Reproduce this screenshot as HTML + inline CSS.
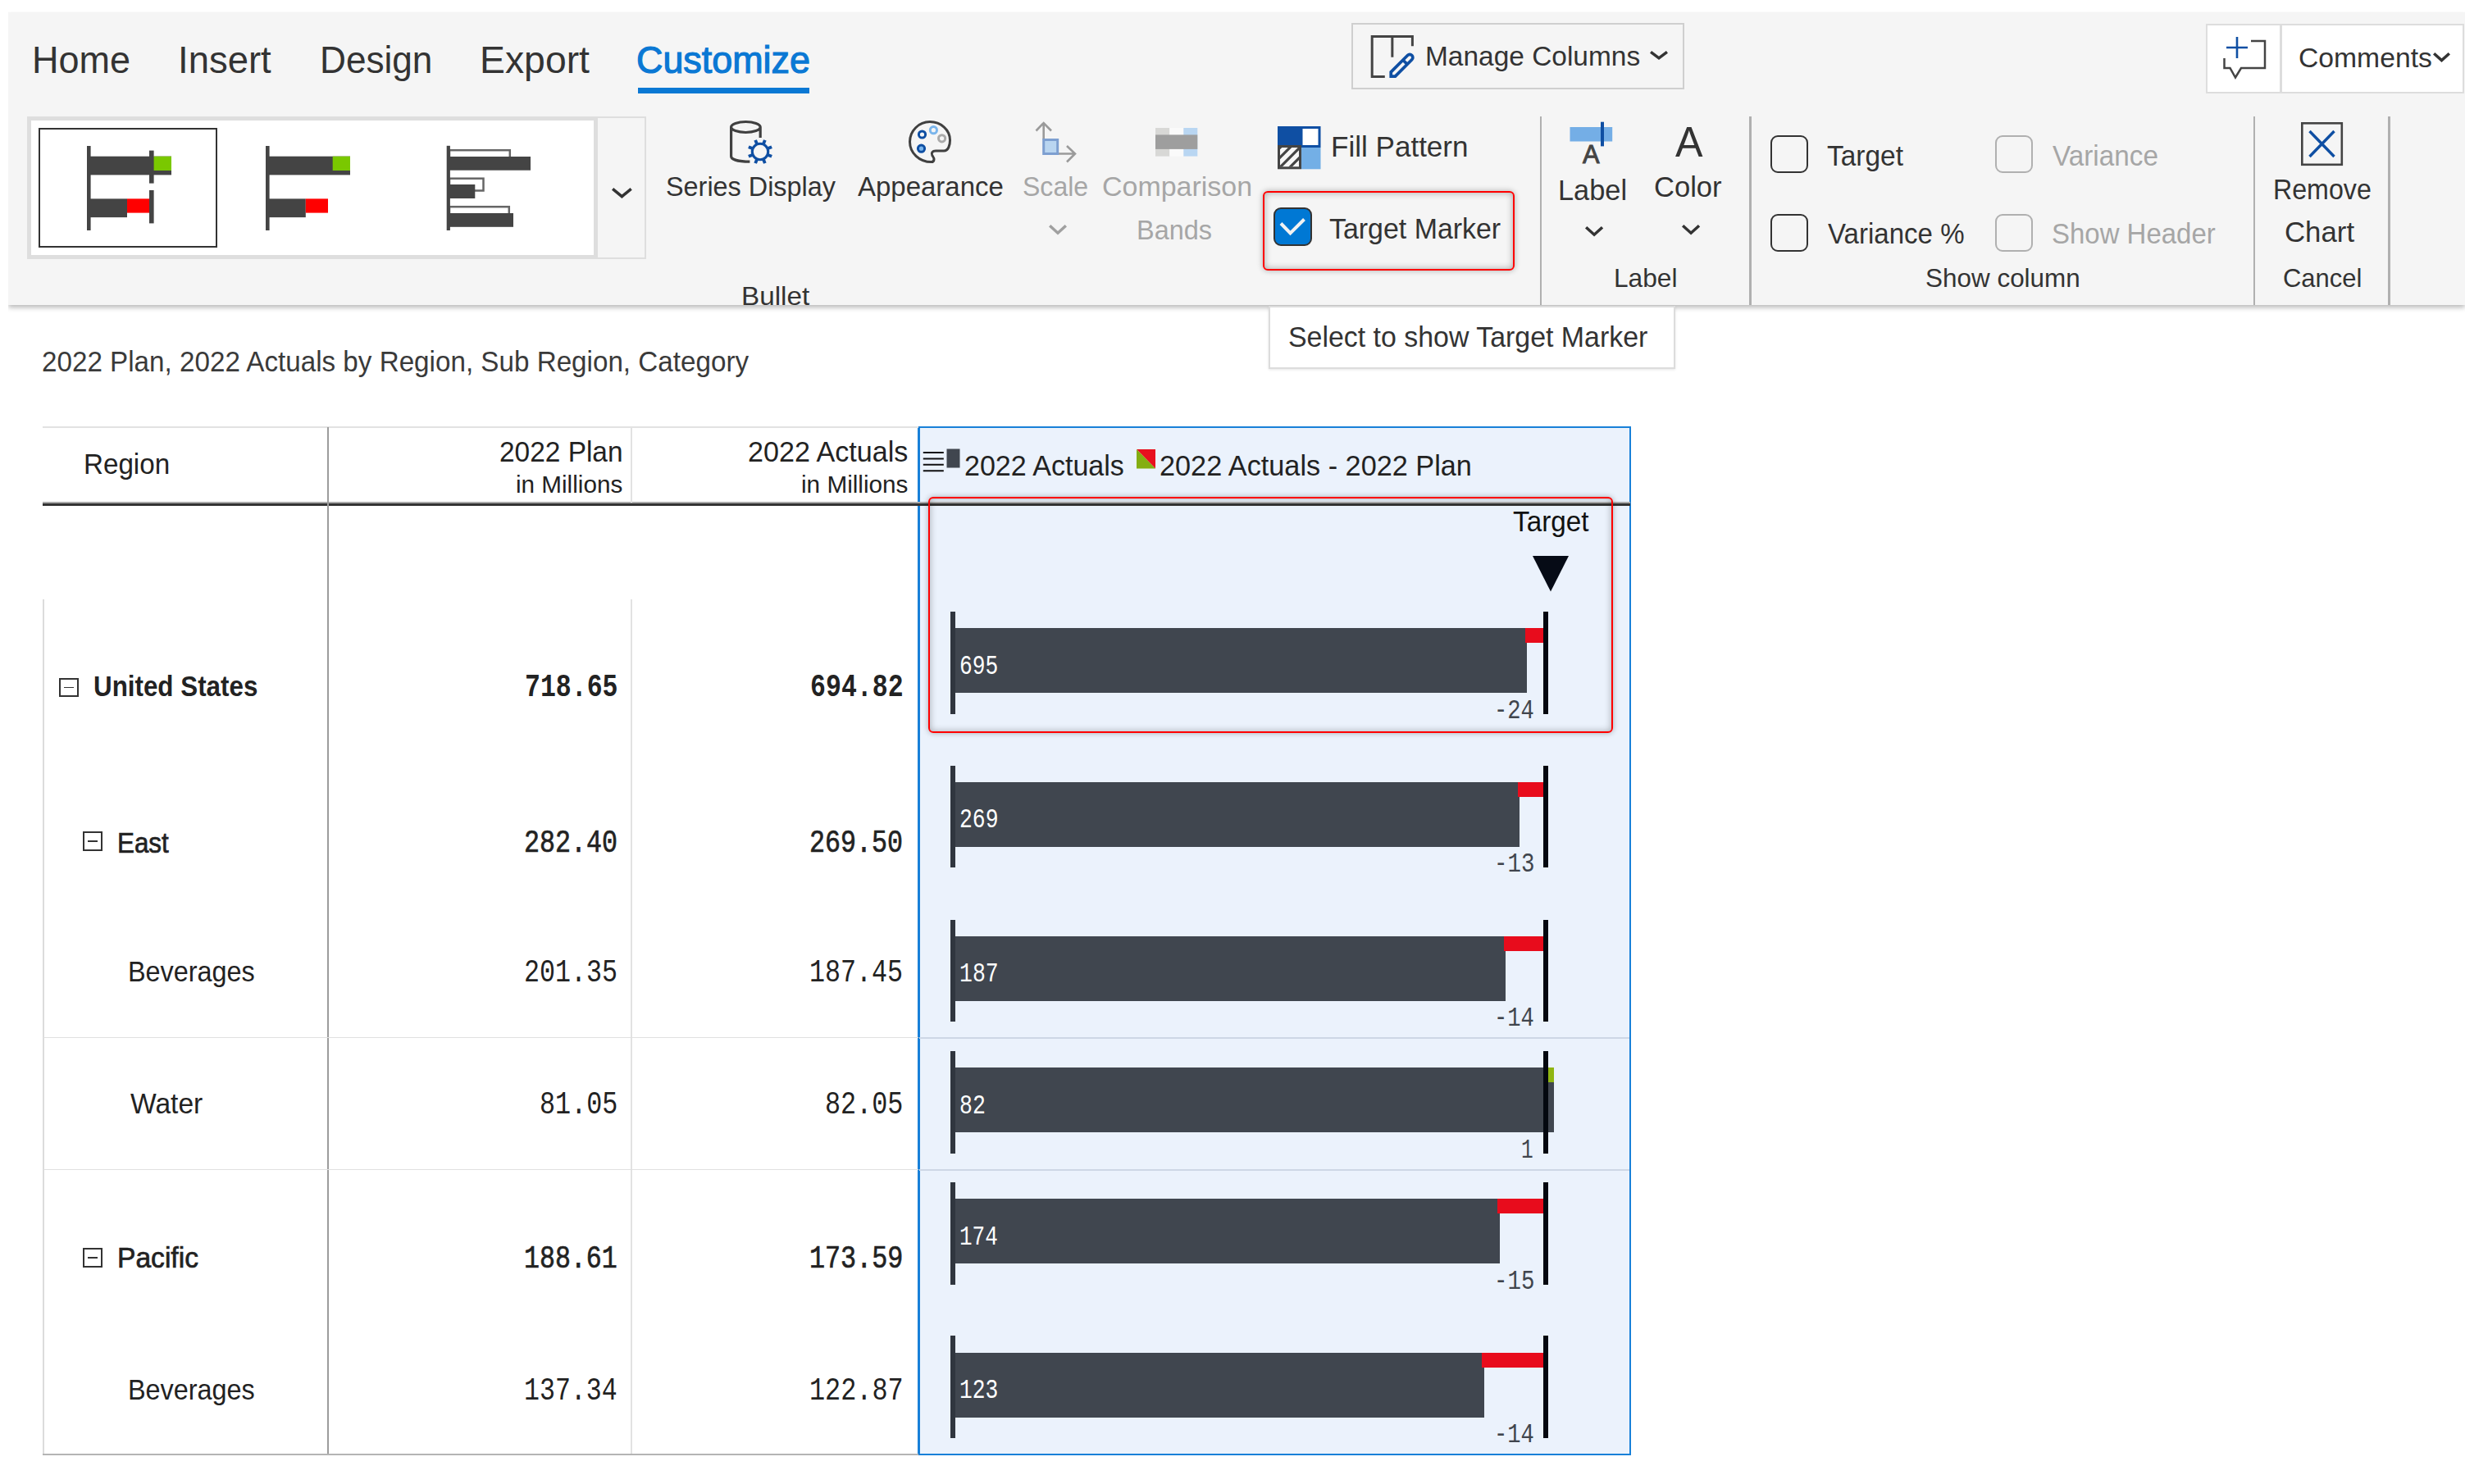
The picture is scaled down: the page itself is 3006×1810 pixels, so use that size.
<!DOCTYPE html>
<html lang="en"><head><meta charset="utf-8"><title>Bullet chart - Target Marker</title>
<style>
html,body{margin:0;padding:0;background:#fff}
body{width:3006px;height:1810px;position:relative;overflow:hidden;font-family:"Liberation Sans","DejaVu Sans",sans-serif;color:#333}
.b{position:absolute;display:block}
.t{position:absolute;white-space:nowrap;line-height:1;transform-origin:0 0;display:block}
.m{font-family:"Liberation Mono","DejaVu Sans Mono",monospace}
nav,section{display:contents}
</style></head><body>
<div id="ribbon" class="b" style="left:10px;top:14.5px;width:2996px;height:357px;background:#f5f5f5;box-shadow:0 2.5px 6px rgba(0,0,0,.28);clip-path:inset(0 0 -14px 0)"></div>
<nav id="tabs">
<span class="t" style="left:38.83px;top:49.56px;font-size:46px;transform:scaleX(0.9786);">Home</span>
<span class="t" style="left:217.05px;top:49.56px;font-size:46px;transform:scaleX(0.9887);">Insert</span>
<span class="t" style="left:390.40px;top:49.56px;font-size:46px;transform:scaleX(0.9597);">Design</span>
<span class="t" style="left:584.72px;top:49.56px;font-size:46px;transform:scaleX(1.0078);">Export</span>
<span class="t" style="left:776.31px;top:49.56px;font-size:46px;transform:scaleX(0.9754);color:#0a78d4;-webkit-text-stroke:1.2px #0a78d4;">Customize</span>
<div class="b" style="left:778px;top:106.9px;width:209px;height:7.3px;background:#0a78d4"></div>
</nav>
<div class="b" style="left:1648px;top:28px;width:406px;height:81px;border:2px solid #cfcfcf;box-sizing:border-box"></div>
<svg class="b" style="left:1668px;top:40px" width="60" height="60" viewBox="0 0 60 60"><path d="M20.8 53.4 H5.2 V4.4 H54.4 V16.3 M29.85 4.4 V29.7" fill="none" stroke="#444" stroke-width="3"/><g transform="translate(26.4,54.9) rotate(45)"><path d="M0 -2.6 L3.7 -6.3 V-35 a3.7 3.7 0 0 0 -7.4 0 V-6.3 Z M-3.7 -27 H3.7" fill="#f5f5f5" stroke="#0f4fa3" stroke-width="3.7" stroke-linejoin="miter"/></g></svg>
<span class="t" style="left:1737.79px;top:50.72px;font-size:34px;transform:scaleX(0.9838);">Manage Columns</span>
<svg class="b" style="left:2008.4px;top:57.8px" width="30" height="19" viewBox="0 0 30 19"><path d="M5.05 5.40 L15.00 12.82 L24.95 5.40" fill="none" stroke="#333" stroke-width="3.5" stroke-linejoin="miter"/></svg>
<div class="b" style="left:2690px;top:28.5px;width:315px;height:85px;background:#fff;border:2px solid #ddd;box-sizing:border-box"></div>
<div class="b" style="left:2780px;top:30px;width:2.5px;height:82px;background:#ddd"></div>
<svg class="b" style="left:2706px;top:40px" width="62" height="60" viewBox="0 0 62 60"><path d="M39 10 H56 V43 H27 L20 54.5 L13.5 43 H6.5 V31" fill="none" stroke="#444" stroke-width="2.5"/><path d="M9 18 H35 M22 5 V31" fill="none" stroke="#0f4fa3" stroke-width="2.6"/></svg>
<span class="t" style="left:2802.51px;top:52.72px;font-size:34px;transform:scaleX(0.9907);">Comments</span>
<svg class="b" style="left:2963.0px;top:60.0px" width="29" height="20" viewBox="0 0 29 20"><path d="M5.17 5.30 L14.50 13.65 L23.83 5.30" fill="none" stroke="#333" stroke-width="3.5" stroke-linejoin="miter"/></svg>
<div class="b" style="left:33px;top:142px;width:696px;height:174px;background:#fff;border:5px solid #dedede;box-sizing:border-box"></div>
<div class="b" style="left:729px;top:142px;width:58.5px;height:174px;border:2px solid #dedede;border-left:none;box-sizing:border-box"></div>
<svg class="b" style="left:742.0px;top:225.0px" width="32.8" height="21" viewBox="0 0 32.8 21"><path d="M5.12 5.35 L16.40 14.72 L27.68 5.35" fill="none" stroke="#333" stroke-width="3.5" stroke-linejoin="miter"/></svg>
<div class="b" style="left:47px;top:156px;width:217.5px;height:145.5px;border:2.5px solid #333;box-sizing:border-box"></div>
<svg class="b" style="left:0px;top:0px" width="800" height="330" viewBox="0 0 800 330"><g fill="#444"><rect x="106" y="178" width="4.6" height="103"/><rect x="110" y="190.7" width="99" height="22.7"/><rect x="110" y="242.4" width="45" height="22.7"/><rect x="182" y="183.6" width="5.6" height="40"/><rect x="182" y="232" width="5.6" height="40.4"/></g><rect x="187.6" y="190.7" width="21.4" height="17.3" fill="#7ac800"/><rect x="155" y="242.4" width="27" height="17.2" fill="#ff0000"/><g fill="#444"><rect x="324" y="178" width="4.6" height="103"/><rect x="328" y="190.7" width="99" height="22.7"/><rect x="328" y="242.4" width="44.8" height="22.7"/></g><rect x="405.7" y="190.7" width="21.3" height="17.3" fill="#7ac800"/><rect x="372.8" y="242.4" width="27.2" height="17.2" fill="#ff0000"/><g fill="none" stroke="#666" stroke-width="2.5"><rect x="548" y="183.2" width="73.8" height="10"/><rect x="548" y="217.7" width="41.5" height="14.8"/><rect x="548" y="252.2" width="72.8" height="10"/></g><g fill="#444"><rect x="544.7" y="177.8" width="4.2" height="103.2"/><rect x="548" y="191" width="99" height="16.7"/><rect x="548" y="225" width="31.3" height="17"/><rect x="548" y="260" width="78" height="16.8"/></g></svg>
<svg class="b" style="left:880px;top:140px" width="70" height="66" viewBox="0 0 70 66"><path d="M47.2 28 V15 a17.8 6.5 0 0 0 -35.6 0 a17.8 6.5 0 0 0 35.6 0 M11.6 15 V50.5 c0 4 9 6.7 22.8 6.7" fill="none" stroke="#404040" stroke-width="3.2"/><g transform="translate(47,45) rotate(22.5)" fill="#0f4fa3"><rect x="-1.9" y="-15.3" width="3.8" height="5" transform="rotate(0)"/><rect x="-1.9" y="-15.3" width="3.8" height="5" transform="rotate(45)"/><rect x="-1.9" y="-15.3" width="3.8" height="5" transform="rotate(90)"/><rect x="-1.9" y="-15.3" width="3.8" height="5" transform="rotate(135)"/><rect x="-1.9" y="-15.3" width="3.8" height="5" transform="rotate(180)"/><rect x="-1.9" y="-15.3" width="3.8" height="5" transform="rotate(225)"/><rect x="-1.9" y="-15.3" width="3.8" height="5" transform="rotate(270)"/><rect x="-1.9" y="-15.3" width="3.8" height="5" transform="rotate(315)"/></g><circle cx="47" cy="45" r="9.7" fill="none" stroke="#0f4fa3" stroke-width="3.1"/></svg>
<span class="t" style="left:812.07px;top:210.22px;font-size:34px;transform:scaleX(0.9525);">Series Display</span>
<svg class="b" style="left:1104px;top:142px" width="62" height="62" viewBox="0 0 62 62"><path d="M31.8 55.6 C17 55.6 5.5 44.5 5.5 31 C5.5 17.5 16.5 6.6 30 6.6 C43.5 6.6 54.5 16.5 54.5 29 C54.5 35 52.5 42 47 42 L37 42 C33 42 31.3 44.8 32.8 47.5 C34 49.5 35.2 51 35 52.5 C34.8 54.5 33.8 55.6 31.8 55.6 Z" fill="none" stroke="#404040" stroke-width="3"/><circle cx="20.5" cy="22" r="4.1" fill="none" stroke="#0f4fa3" stroke-width="3"/><circle cx="34.4" cy="16.7" r="4.1" fill="none" stroke="#7ab5ec" stroke-width="3"/><circle cx="44.6" cy="26.8" r="4.1" fill="none" stroke="#aaa" stroke-width="3"/><circle cx="19.5" cy="39.2" r="4.1" fill="#7ab5ec" stroke="#0f4fa3" stroke-width="3"/></svg>
<span class="t" style="left:1045.50px;top:210.22px;font-size:34px;transform:scaleX(0.9698);">Appearance</span>
<svg class="b" style="left:1256px;top:142px" width="62" height="62" viewBox="0 0 62 62"><path d="M16.7 28 V8 M7.5 17.5 L16.7 8 L26 17.5 M35 45.5 H55 M45 36 L55 45.5 L45 55.5" fill="none" stroke="#9a9a9a" stroke-width="2.6"/><rect x="16.7" y="28.5" width="17" height="17" fill="#b9d5f0" stroke="#7d9fd0" stroke-width="3"/></svg>
<span class="t" style="left:1247.09px;top:210.22px;font-size:34px;transform:scaleX(0.9422);color:#a6a6a6;">Scale</span>
<svg class="b" style="left:1275.0px;top:270.2px" width="30" height="20.6" viewBox="0 0 30 20.6"><path d="M5.18 5.29 L15.00 14.23 L24.82 5.29" fill="none" stroke="#a0a0a0" stroke-width="3.5" stroke-linejoin="miter"/></svg>
<svg class="b" style="left:1409px;top:156px" width="52" height="35" viewBox="0 0 52 35"><rect x="0" y="0" width="17.3" height="34.6" fill="#d8d8d6"/><rect x="17.3" y="0" width="17" height="34.6" fill="#fafafa"/><rect x="34.3" y="0" width="17" height="34.6" fill="#b9d6f2"/><rect x="0" y="8.4" width="51.3" height="17.5" fill="#9e9e9e"/></svg>
<span class="t" style="left:1344.00px;top:210.22px;font-size:34px;transform:scaleX(0.9986);color:#a6a6a6;">Comparison</span>
<span class="t" style="left:1385.88px;top:262.72px;font-size:34px;transform:scaleX(0.9542);color:#a6a6a6;">Bands</span>
<svg class="b" style="left:1558px;top:154px" width="53" height="53" viewBox="0 0 53 53"><defs><clipPath id="hc"><rect x="3" y="26" width="23" height="23.5"/></clipPath></defs><rect x="0" y="0" width="29" height="24" fill="#0f4fa3"/><rect x="29" y="26" width="23.5" height="26.3" fill="#73afe6"/><rect x="29" y="1.5" width="22" height="23" fill="#fff" stroke="#0f4fa3" stroke-width="3"/><rect x="1.5" y="24.5" width="26" height="26.3" fill="#f6f6f6" stroke="#444" stroke-width="3"/><g clip-path="url(#hc)" stroke="#444" stroke-width="3.2"><path d="M-8 37 L18 11 M-6 47 L28 13 M2 51 L32 21 M12 53 L34 31"/></g></svg>
<span class="t" style="left:1623.25px;top:160.87px;font-size:35px;transform:scaleX(1.0015);">Fill Pattern</span>
<div class="b" style="left:1539.5px;top:233px;width:307.5px;height:96.5px;border:2px solid #f00;border-radius:6px;box-sizing:border-box;box-shadow:0 0 7px rgba(0,0,0,.3), inset 0 0 8px rgba(0,0,0,.32)"></div>
<div class="b" style="left:1553px;top:253px;width:46.5px;height:46.5px;background:#0078d4;border:2.6px solid #333;border-radius:9px;box-sizing:border-box"></div>
<svg class="b" style="left:1553px;top:253px" width="46.5" height="46.5" viewBox="0 0 46.5 46.5"><path d="M9 19.5 L20.5 31.5 L37.5 14.5" fill="none" stroke="#f2f2f2" stroke-width="4"/></svg>
<span class="t" style="left:1621.27px;top:260.87px;font-size:35px;transform:scaleX(0.9686);">Target Marker</span>
<span class="t" style="left:904.40px;top:345.21px;font-size:32px;transform:scaleX(1.0387);">Bullet</span>
<div class="b" style="left:1877.8px;top:142px;width:2.6px;height:229.5px;background:#b0b0b0"></div>
<div class="b" style="left:2133.3px;top:142px;width:2.6px;height:229.5px;background:#b0b0b0"></div>
<div class="b" style="left:2747.8px;top:142px;width:2.6px;height:229.5px;background:#b0b0b0"></div>
<div class="b" style="left:2912.4px;top:142px;width:2.6px;height:229.5px;background:#b0b0b0"></div>
<svg class="b" style="left:1910px;top:146px" width="62" height="58" viewBox="0 0 62 58"><rect x="4.5" y="9" width="51.7" height="17.5" fill="#74aee6"/><rect x="42" y="2.7" width="4" height="29.7" fill="#0f4fa3"/></svg>
<span class="t" style="left:1930.00px;top:172.64px;font-size:31.5px;transform:scaleX(0.9762);color:#444;-webkit-text-stroke:1px #444;">A</span>
<span class="t" style="left:1899.80px;top:214.37px;font-size:35px;transform:scaleX(0.9814);">Label</span>
<svg class="b" style="left:1928.9px;top:272.0px" width="30.2" height="20.6" viewBox="0 0 30.2 20.6"><path d="M5.17 5.30 L15.10 14.24 L25.03 5.30" fill="none" stroke="#333" stroke-width="3.5" stroke-linejoin="miter"/></svg>
<span class="t" style="left:2043.00px;top:148.33px;font-size:51px;transform:scaleX(0.9853);">A</span>
<span class="t" style="left:2017.27px;top:209.87px;font-size:35px;transform:scaleX(0.9877);">Color</span>
<svg class="b" style="left:2046.9px;top:269.6px" width="30.2" height="20.6" viewBox="0 0 30.2 20.6"><path d="M5.17 5.30 L15.10 14.24 L25.03 5.30" fill="none" stroke="#333" stroke-width="3.5" stroke-linejoin="miter"/></svg>
<span class="t" style="left:1967.53px;top:323.11px;font-size:32px;transform:scaleX(0.9898);">Label</span>
<div class="b" style="left:2158.5px;top:165px;width:46px;height:46px;border:2.6px solid #333;border-radius:9px;box-sizing:border-box"></div>
<span class="t" style="left:2228.28px;top:171.87px;font-size:35px;transform:scaleX(0.9558);">Target</span>
<div class="b" style="left:2158.5px;top:260.5px;width:46px;height:46px;border:2.6px solid #333;border-radius:9px;box-sizing:border-box"></div>
<span class="t" style="left:2229.00px;top:266.57px;font-size:35px;transform:scaleX(0.9444);">Variance %</span>
<div class="b" style="left:2432.5px;top:165px;width:46px;height:46px;border:2.6px solid #b0b0b0;border-radius:9px;box-sizing:border-box"></div>
<span class="t" style="left:2502.50px;top:171.87px;font-size:35px;transform:scaleX(0.9515);color:#a6a6a6;">Variance</span>
<div class="b" style="left:2432.5px;top:260.5px;width:46px;height:46px;border:2.6px solid #b0b0b0;border-radius:9px;box-sizing:border-box"></div>
<span class="t" style="left:2501.59px;top:266.57px;font-size:35px;transform:scaleX(0.9417);color:#a6a6a6;">Show Header</span>
<span class="t" style="left:2347.77px;top:323.31px;font-size:32px;transform:scaleX(0.9828);">Show column</span>
<svg class="b" style="left:2803px;top:146px" width="58" height="60" viewBox="0 0 58 60"><rect x="4.3" y="4.3" width="48.5" height="50.5" fill="none" stroke="#444" stroke-width="2.6"/><path d="M13.5 14 L43.5 45 M43.5 14 L13.5 45" stroke="#0f4fa3" stroke-width="3.4" fill="none"/></svg>
<span class="t" style="left:2772.01px;top:214.15px;font-size:35.5px;transform:scaleX(0.9062);">Remove</span>
<span class="t" style="left:2785.76px;top:264.87px;font-size:35px;transform:scaleX(0.9940);">Chart</span>
<span class="t" style="left:2783.55px;top:323.41px;font-size:32px;transform:scaleX(0.9667);">Cancel</span>
<div class="b" style="left:1547px;top:372.5px;width:495.5px;height:77px;background:#fff;border:2px solid #dcdcdc;box-sizing:border-box;box-shadow:0 1px 3px rgba(0,0,0,.10)"></div>
<span class="t" style="left:1571.05px;top:392.87px;font-size:35px;transform:scaleX(0.9684);">Select to show Target Marker</span>
<span class="t" style="left:50.84px;top:422.87px;font-size:35px;transform:scaleX(0.9487);color:#3a3a3a;">2022 Plan, 2022 Actuals by Region, Sub Region, Category</span>
<section id="table">
<div class="b" style="left:1118.5px;top:520px;width:870.5px;height:1254.5px;background:#ebf2fc;border:2.4px solid #1880d8;border-left-width:3px;box-sizing:border-box"></div>
<div class="b" style="left:51.5px;top:519.5px;width:1068px;height:2px;background:#e2e2e2"></div>
<div class="b" style="left:51.5px;top:612.3px;width:1936px;height:2.2px;background:#a9a9a9"></div>
<div class="b" style="left:51.5px;top:614.2px;width:1936px;height:3.3px;background:#333"></div>
<div class="b" style="left:398.5px;top:521px;width:2px;height:1253px;background:#9c9c9c"></div>
<div class="b" style="left:769.3px;top:521px;width:1.8px;height:92px;background:#e2e2e2"></div>
<div class="b" style="left:769.3px;top:731px;width:1.8px;height:1043px;background:#e2e2e2"></div>
<div class="b" style="left:52.3px;top:731px;width:1.8px;height:1043px;background:#dcdcdc"></div>
<div class="b" style="left:53px;top:1264.5px;width:1066.5px;height:1.8px;background:#e0e0e0"></div>
<div class="b" style="left:1121px;top:1264.5px;width:865.6px;height:2.2px;background:#cdd7e5"></div>
<div class="b" style="left:53px;top:1425.5px;width:1066.5px;height:1.8px;background:#e0e0e0"></div>
<div class="b" style="left:1121px;top:1425.5px;width:865.6px;height:2.2px;background:#cdd7e5"></div>
<div class="b" style="left:51.5px;top:1772.6px;width:1068px;height:2.2px;background:#b4b4b4"></div>
<span class="t" style="left:101.89px;top:547.87px;font-size:35px;transform:scaleX(0.9481);color:#222;">Region</span>
<span class="t" style="left:608.83px;top:532.87px;font-size:35px;transform:scaleX(0.9548);color:#222;">2022 Plan</span>
<span class="t" style="left:628.52px;top:576.11px;font-size:30px;transform:scaleX(0.9887);color:#222;">in Millions</span>
<span class="t" style="left:911.79px;top:532.87px;font-size:35px;transform:scaleX(0.9747);color:#222;">2022 Actuals</span>
<span class="t" style="left:976.52px;top:576.11px;font-size:30px;transform:scaleX(0.9903);color:#222;">in Millions</span>
<svg class="b" style="left:1124px;top:545px" width="50" height="32" viewBox="0 0 50 32"><path d="M1.8 7 H26.8 M1.8 14.5 H26.8 M1.8 21.8 H26.8 M1.8 29.2 H26.8" stroke="#111" stroke-width="2"/><rect x="30.5" y="2.5" width="16" height="23" fill="#40464f"/></svg>
<span class="t" style="left:1176.30px;top:550.37px;font-size:35px;transform:scaleX(0.9722);color:#222;">2022 Actuals</span>
<svg class="b" style="left:1385.8px;top:547.5px" width="24" height="24" viewBox="0 0 24 24"><path d="M0 0 H23 V23.4 Z" fill="#e8101e"/><path d="M0 0 V23.4 H23 Z" fill="#84ae12"/></svg>
<span class="t" style="left:1414.29px;top:550.37px;font-size:35px;transform:scaleX(0.9786);color:#222;">2022 Actuals - 2022 Plan</span>
<span class="t" style="left:113.71px;top:818.87px;font-size:35px;transform:scaleX(0.8957);font-weight:700;color:#222;">United States</span>
<div class="b" style="left:72px;top:826.5px;width:23.5px;height:23.5px;border:2px solid #333;box-sizing:border-box"><i style="position:absolute;left:4px;top:9px;width:11.5px;height:1.8px;background:#333"></i></div>
<span class="t m" style="left:639.67px;top:819.58px;font-size:38.8px;transform:scaleX(0.8123);font-weight:700;color:#222;">718.65</span>
<span class="t m" style="left:987.67px;top:819.58px;font-size:38.8px;transform:scaleX(0.8138);font-weight:700;color:#222;">694.82</span>
<span class="t" style="left:143.04px;top:1009.67px;font-size:35px;transform:scaleX(0.8955);color:#222;-webkit-text-stroke:.7px #222;">East</span>
<div class="b" style="left:101px;top:1014.3px;width:23.5px;height:23.5px;border:2px solid #333;box-sizing:border-box"><i style="position:absolute;left:4px;top:9px;width:11.5px;height:1.8px;background:#333"></i></div>
<span class="t m" style="left:639.46px;top:1010.38px;font-size:38.8px;transform:scaleX(0.8153);color:#222;-webkit-text-stroke:.7px #222;">282.40</span>
<span class="t m" style="left:987.46px;top:1010.38px;font-size:38.8px;transform:scaleX(0.8153);color:#222;-webkit-text-stroke:.7px #222;">269.50</span>
<span class="t" style="left:155.96px;top:1167.37px;font-size:35px;transform:scaleX(0.9250);color:#222;">Beverages</span>
<span class="t m" style="left:639.46px;top:1168.08px;font-size:38.8px;transform:scaleX(0.8153);color:#222;">201.35</span>
<span class="t m" style="left:987.25px;top:1168.08px;font-size:38.8px;transform:scaleX(0.8168);color:#222;">187.45</span>
<span class="t" style="left:158.50px;top:1328.37px;font-size:35px;transform:scaleX(0.9591);color:#222;">Water</span>
<span class="t m" style="left:657.95px;top:1329.08px;font-size:38.8px;transform:scaleX(0.8196);color:#222;">81.05</span>
<span class="t m" style="left:1005.95px;top:1329.08px;font-size:38.8px;transform:scaleX(0.8196);color:#222;">82.05</span>
<span class="t" style="left:142.86px;top:1515.87px;font-size:35px;transform:scaleX(0.9598);color:#222;-webkit-text-stroke:.7px #222;">Pacific</span>
<div class="b" style="left:101px;top:1522px;width:23.5px;height:23.5px;border:2px solid #333;box-sizing:border-box"><i style="position:absolute;left:4px;top:9px;width:11.5px;height:1.8px;background:#333"></i></div>
<span class="t m" style="left:639.26px;top:1516.58px;font-size:38.8px;transform:scaleX(0.8138);color:#222;-webkit-text-stroke:.7px #222;">188.61</span>
<span class="t m" style="left:987.25px;top:1516.58px;font-size:38.8px;transform:scaleX(0.8183);color:#222;-webkit-text-stroke:.7px #222;">173.59</span>
<span class="t" style="left:155.96px;top:1676.87px;font-size:35px;transform:scaleX(0.9250);color:#222;">Beverages</span>
<span class="t m" style="left:639.26px;top:1677.58px;font-size:38.8px;transform:scaleX(0.8138);color:#222;">137.34</span>
<span class="t m" style="left:987.24px;top:1677.58px;font-size:38.8px;transform:scaleX(0.8214);color:#222;">122.87</span>
<span class="t" style="left:1844.79px;top:617.67px;font-size:35px;transform:scaleX(0.9506);color:#111;">Target</span>
<svg class="b" style="left:1869px;top:678px" width="45" height="44" viewBox="0 0 45 44"><path d="M0 0 H44 L22 43.5 Z" fill="#060b16"/></svg>
<div class="b" style="left:1165px;top:766.2px;width:697px;height:79px;background:#40464f"></div>
<div class="b" style="left:1859.5px;top:766.2px;width:23.0px;height:18px;background:#e80c1c"></div>
<div class="b" style="left:1159px;top:746px;width:6px;height:124.5px;background:#30363f"></div>
<div class="b" style="left:1882px;top:746px;width:6px;height:124.5px;background:#04080f"></div>
<span class="t m" style="left:1170.22px;top:796.59px;font-size:33.3px;transform:scaleX(0.7881);color:#fff;">695</span>
<span class="t m" style="left:1822.21px;top:850.89px;font-size:33.3px;transform:scaleX(0.8157);color:#40454d;">-24</span>
<div class="b" style="left:1165px;top:953.7px;width:688px;height:79px;background:#40464f"></div>
<div class="b" style="left:1850.5px;top:953.7px;width:32.0px;height:18px;background:#e80c1c"></div>
<div class="b" style="left:1159px;top:933.5px;width:6px;height:124.5px;background:#30363f"></div>
<div class="b" style="left:1882px;top:933.5px;width:6px;height:124.5px;background:#04080f"></div>
<span class="t m" style="left:1170.22px;top:984.09px;font-size:33.3px;transform:scaleX(0.7916);color:#fff;">269</span>
<span class="t m" style="left:1822.17px;top:1038.39px;font-size:33.3px;transform:scaleX(0.8234);color:#40454d;">-13</span>
<div class="b" style="left:1165px;top:1141.7px;width:671px;height:79px;background:#40464f"></div>
<div class="b" style="left:1833.5px;top:1141.7px;width:49.0px;height:18px;background:#e80c1c"></div>
<div class="b" style="left:1159px;top:1121.5px;width:6px;height:124.5px;background:#30363f"></div>
<div class="b" style="left:1882px;top:1121.5px;width:6px;height:124.5px;background:#04080f"></div>
<span class="t m" style="left:1170.21px;top:1172.09px;font-size:33.3px;transform:scaleX(0.7952);color:#fff;">187</span>
<span class="t m" style="left:1822.21px;top:1226.39px;font-size:33.3px;transform:scaleX(0.8157);color:#40454d;">-14</span>
<div class="b" style="left:1165px;top:1302.2px;width:730px;height:79px;background:#40464f"></div>
<div class="b" style="left:1888px;top:1302.2px;width:7px;height:18px;background:#8fb512"></div>
<div class="b" style="left:1159px;top:1282px;width:6px;height:124.5px;background:#30363f"></div>
<div class="b" style="left:1882px;top:1282px;width:6px;height:124.5px;background:#04080f"></div>
<span class="t m" style="left:1170.41px;top:1332.59px;font-size:33.3px;transform:scaleX(0.7960);color:#fff;">82</span>
<span class="t m" style="left:1855.34px;top:1386.89px;font-size:33.3px;transform:scaleX(0.7374);color:#40454d;">1</span>
<div class="b" style="left:1165px;top:1462.2px;width:663.5px;height:79px;background:#40464f"></div>
<div class="b" style="left:1826px;top:1462.2px;width:56.5px;height:18px;background:#e80c1c"></div>
<div class="b" style="left:1159px;top:1442px;width:6px;height:124.5px;background:#30363f"></div>
<div class="b" style="left:1882px;top:1442px;width:6px;height:124.5px;background:#04080f"></div>
<span class="t m" style="left:1170.24px;top:1492.59px;font-size:33.3px;transform:scaleX(0.7810);color:#fff;">174</span>
<span class="t m" style="left:1822.17px;top:1546.89px;font-size:33.3px;transform:scaleX(0.8234);color:#40454d;">-15</span>
<div class="b" style="left:1165px;top:1649.5px;width:645px;height:79px;background:#40464f"></div>
<div class="b" style="left:1807px;top:1649.5px;width:75.5px;height:18px;background:#e80c1c"></div>
<div class="b" style="left:1159px;top:1629.3px;width:6px;height:124.5px;background:#30363f"></div>
<div class="b" style="left:1882px;top:1629.3px;width:6px;height:124.5px;background:#04080f"></div>
<span class="t m" style="left:1170.22px;top:1679.89px;font-size:33.3px;transform:scaleX(0.7881);color:#fff;">123</span>
<span class="t m" style="left:1822.21px;top:1734.19px;font-size:33.3px;transform:scaleX(0.8157);color:#40454d;">-14</span>
<div class="b" style="left:1131.5px;top:606px;width:835px;height:288px;border:2px solid #f00;border-radius:6px;box-sizing:border-box;box-shadow:0 0 7px rgba(0,0,0,.3), inset 0 0 8px rgba(0,0,0,.3)"></div>
</section>
</body></html>
